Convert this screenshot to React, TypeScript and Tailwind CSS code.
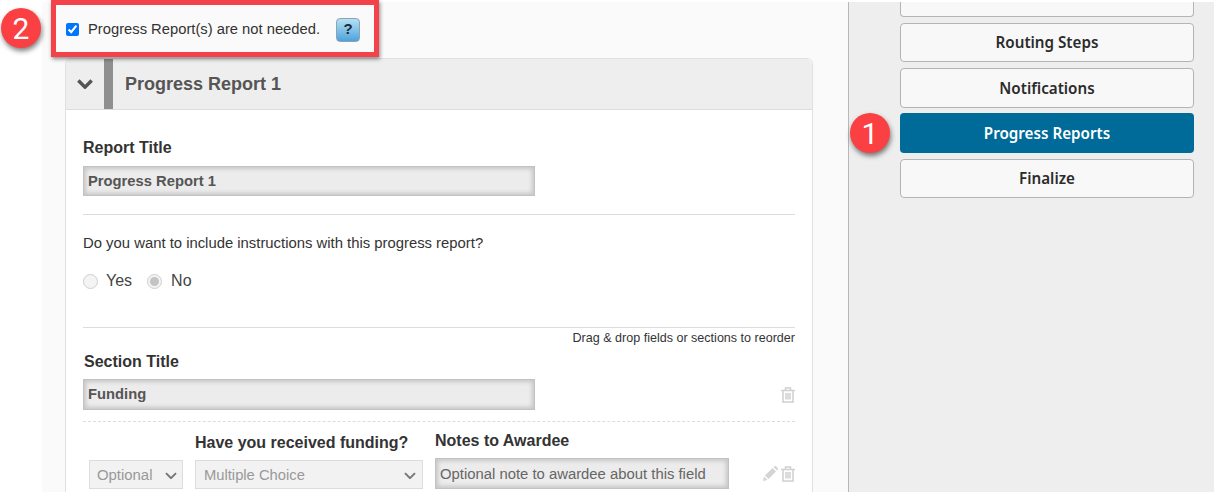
import React from "react";

const inputClass =
  "bg-[#ececec] border border-[#c2c2c2] shadow-[inset_0_0_4px_2px_#c6c6c6] flex items-center px-[4px]";

function Trash() {
  return (
    <svg width="14" height="16" viewBox="0 0 14 16" fill="none" stroke="#d0d0d0" strokeWidth="1.5">
      <path d="M0 3.5H14" />
      <path d="M4.5 3V1H9.5V3" />
      <path d="M2 3.5V15H12V3.5" />
      <path d="M5 6V12.5M7 6V12.5M9 6V12.5" />
    </svg>
  );
}

function Pencil() {
  return (
    <svg width="15" height="15" viewBox="0 0 15 15" fill="#d4d4d4">
      <path d="M0 15L1 10.5L4.5 14L0 15Z" />
      <path d="M2 9.5L9.5 2L13 5.5L5.5 13L2 9.5Z" />
      <path d="M10.5 1L11.5 0.2C12 -0.1 12.6 -0.1 13 0.3L14.7 2C15.1 2.4 15.1 3 14.8 3.5L14 4.5L10.5 1Z" />
    </svg>
  );
}

function Chevron({ color = "#666", w = 12, stroke = 2 }: { color?: string; w?: number; stroke?: number }) {
  return (
    <svg width={w} height={w * 0.6} viewBox="0 0 12 7" fill="none" stroke={color} strokeWidth={stroke}>
      <path d="M1 1L6 6L11 1" />
    </svg>
  );
}

function Badge({ n, className }: { n: string; className: string }) {
  return (
    <div
      className={
        "absolute w-10 h-10 rounded-full bg-[#fb4044] text-white text-[30px] font-['Roboto',sans-serif] flex items-center justify-center shadow-[1px_3px_5px_rgba(0,0,0,0.5)] " +
        className
      }
    >
      {n}
    </div>
  );
}

function SideButton({ label, active, className }: { label: string; active?: boolean; className?: string }) {
  return (
    <div
      className={
        "w-[294px] rounded-[4px] flex items-center justify-center text-[15.2px] font-semibold font-['Noto_Sans',sans-serif] " +
        (active ? "bg-[#006b99] text-white " : "bg-[#f8f8f8] border border-[#b4b4b4] text-[#2b2b2b] ") +
        (className || "")
      }
    >
      {label}
    </div>
  );
}

function Radio({ checked }: { checked?: boolean }) {
  return (
    <span className="w-[15px] h-[15px] rounded-full border border-[#cfcfcf] bg-[#f4f4f4] flex items-center justify-center">
      {checked && <span className="w-[9px] h-[9px] rounded-full bg-[#c4c4c4]" />}
    </span>
  );
}

export default function App() {
  return (
    <div className="relative w-[1214px] h-[492px] overflow-hidden bg-white flex font-['Liberation_Sans',Arial,sans-serif] text-[#333]">
      <div className="w-[42px] shrink-0 bg-white" />

      {/* main column */}
      <div className="w-[806px] shrink-0 mt-[2px] bg-[#fafafa] pl-[23px]">
        <div className="h-[56px] flex items-center pl-[1px] pb-[1px] text-[14.75px]">
          <input type="checkbox" defaultChecked className="w-[13px] h-[13px] accent-[#0075ff]" />
          <span className="ml-[9px] -mt-[1px]">Progress Report(s) are not needed.</span>
          <span className="ml-[16px] w-[24px] h-[24px] rounded-[4px] border border-[#8aa4b4] bg-gradient-to-b from-[#b5e0f5] to-[#4aa3dc] flex items-center justify-center font-bold text-[15px] text-[#1e2a33]">
            ?
          </span>
        </div>

        <div className="w-[748px] h-[500px] bg-white border border-[#e0e0e0] rounded-t-[6px]">
          <div className="h-[51px] bg-[#eeeeee] border-b border-[#dddddd] rounded-t-[6px] flex">
            <div className="w-[38px] flex items-center justify-center">
              <Chevron w={16} stroke={2.6} color="#555" />
            </div>
            <div className="w-[9px] bg-[#8f8f8f]" />
            <div className="pl-[12px] flex items-center text-[18px] font-bold text-[#555]">Progress Report 1</div>
          </div>

          <div className="pl-[17px] pr-[17px]">
            <div className="pt-[29px] text-[16px] font-bold leading-[18px] text-[#333]">Report Title</div>
            <div className={inputClass + " mt-[9px] w-[452px] h-[30px] text-[14.75px] font-bold text-[#555]"}>Progress Report 1</div>
            <div className="mt-[18px] border-t border-[#dddddd]" />
            <div className="mt-[20px] text-[14.85px] leading-[16px]">Do you want to include instructions with this progress report?</div>
            <div className="mt-[21px] flex items-center text-[16px] leading-[18px] text-[#444]">
              <Radio />
              <span className="ml-[8px]">Yes</span>
              <span className="ml-[15px]">
                <Radio checked />
              </span>
              <span className="ml-[9px]">No</span>
            </div>

            <div className="mt-[37px] border-t border-[#dddddd]" />
            <div className="mt-[3px] text-right text-[12.55px] leading-[14px] text-[#333]">Drag &amp; drop fields or sections to reorder</div>
            <div className="mt-[8px] pl-[1px] text-[16px] font-bold leading-[18px]">Section Title</div>
            <div className="mt-[8px] flex items-center justify-between">
              <div className={inputClass + " w-[452px] h-[31px] text-[14.75px] font-bold text-[#555]"}>Funding</div>
              <Trash />
            </div>
            <div className="mt-[11px] border-t border-dashed border-[#dddddd]" />

            <div className="flex items-start mt-[10px]">
              <div className="mt-[28px] ml-[6px] w-[94px] h-[29px] bg-[#f2f2f2] border border-[#dcdcdc] flex items-center justify-between pl-[7px] pr-[5px] pt-[2px] text-[14.9px] text-[#999]">
                Optional
                <Chevron w={12} color="#777" />
              </div>
              <div className="ml-[12px] pt-[2px]">
                <div className="text-[16px] font-bold leading-[18px] mb-[8px]">Have you received funding?</div>
                <div className="w-[228px] h-[29px] bg-[#f2f2f2] border border-[#dcdcdc] flex items-center justify-between pl-[8px] pr-[6px] pt-[2px] text-[14.75px] text-[#999]">
                  Multiple Choice
                  <Chevron w={12} color="#777" />
                </div>
              </div>
              <div className="ml-[12px]">
                <div className="text-[16px] font-bold leading-[18px] mb-[8px]">Notes to Awardee</div>
                <div className={inputClass + " w-[294px] h-[31px] pt-[2px] text-[14.85px] font-normal text-[#666]"}>
                  Optional note to awardee about this field
                </div>
              </div>
              <div className="ml-auto mt-[26px] h-[31px] flex items-center gap-[3px]">
                <Pencil />
                <Trash />
              </div>
            </div>
          </div>
        </div>
      </div>

      {/* sidebar */}
      <div className="flex-1 mt-[2px] bg-[#eeeeee] border-l border-[#b8b8b8] pl-[51px] flex flex-col">
        <SideButton label="" className="h-[15px] rounded-t-none border-t-0" />
        <SideButton label="Routing Steps" className="h-[39px] mt-[6px]" />
        <SideButton label="Notifications" className="h-[40px] mt-[6px]" />
        <SideButton label="Progress Reports" active className="h-[40px] mt-[5px]" />
        <SideButton label="Finalize" className="h-[39px] mt-[6px]" />
      </div>

      {/* callouts */}
      <div className="absolute left-[51px] top-0 w-[328px] h-[57px] border-[5px] border-[#f4424a] shadow-[1px_2px_4px_rgba(0,0,0,0.45)]" />
      <Badge n="2" className="left-[1px] top-[8px]" />
      <Badge n="1" className="left-[850px] top-[113px]" />
    </div>
  );
}
